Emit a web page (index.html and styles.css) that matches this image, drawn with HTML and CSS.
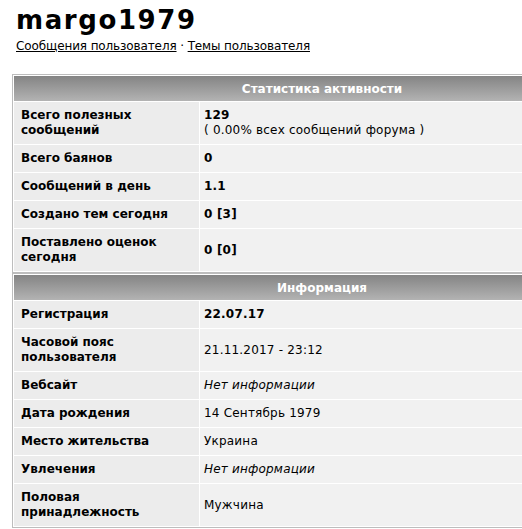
FILE: index.html
```html
<!DOCTYPE html>
<html lang="ru">
<head>
    <meta charset="UTF-8">
    <title>margo1979</title>
    <link rel="stylesheet" href="styles.css">
</head>
<body>

    <div class="page">
        <div class="profile-head">
            <h1>margo1979</h1>
            <div class="profile-links">
                <a href="#">Сообщения пользователя</a> &middot; <a href="#">Темы пользователя</a>
            </div>
        </div>

        <table class="profile-table">
            <tr><th colspan="2">Статистика активности</th></tr>
            <tr>
                <td class="label">Всего полезных сообщений</td>
                <td class="value"><b>129</b><br>( 0.00% всех сообщений форума )</td>
            </tr>
            <tr><td class="label">Всего баянов</td><td class="value"><b>0</b></td></tr>
            <tr><td class="label">Сообщений в день</td><td class="value"><b>1.1</b></td></tr>
            <tr><td class="label">Создано тем сегодня</td><td class="value"><b>0 [3]</b></td></tr>
            <tr><td class="label">Поставлено оценок сегодня</td><td class="value"><b>0 [0]</b></td></tr>
        </table>

        <table class="profile-table">
            <tr><th colspan="2">Информация</th></tr>
            <tr><td class="label">Регистрация</td><td class="value"><b>22.07.17</b></td></tr>
            <tr><td class="label">Часовой пояс пользователя</td><td class="value">21.11.2017 - 23:12</td></tr>
            <tr><td class="label">Вебсайт</td><td class="value"><i>Нет информации</i></td></tr>
            <tr><td class="label">Дата рождения</td><td class="value">14 Сентябрь 1979</td></tr>
            <tr><td class="label">Место жительства</td><td class="value">Украина</td></tr>
            <tr><td class="label">Увлечения</td><td class="value"><i>Нет информации</i></td></tr>
            <tr><td class="label">Половая принадлежность</td><td class="value">Мужчина</td></tr>
        </table>
    </div>

</body>
</html>
```

FILE: styles.css
```css
html, body {
    overflow: hidden;
}

body {
    font-family: "DejaVu Sans", Verdana, sans-serif;
    font-size: 12px;
    color: #000;
    background: #fff;
    margin: 0;
    padding: 0;
}

.page {
    width: 640px;
    padding-left: 12px;
}

.profile-head {
    padding-left: 4px;
    margin-bottom: 20px;
}

h1 {
    font-size: 26px;
    letter-spacing: 1.6px;
    line-height: 30px;
    margin: 5px 0 0;
}

.profile-links {
    line-height: 16px;
    margin-top: 3px;
    letter-spacing: -0.12px;
}

.profile-links a {
    color: #000;
    text-decoration: underline;
}

.profile-table {
    width: 620px;
    border: 1px solid #bdbdbd;
    border-spacing: 1px;
    background: #fff;
    margin: 0;
}

.profile-table th {
    height: 25px;
    padding: 0;
    color: #fff;
    font-weight: bold;
    text-align: center;
    background: linear-gradient(#848484, #b3b3b3);
}

.profile-table td {
    line-height: 15px;
    padding: 6px 4px;
    vertical-align: middle;
    text-align: left;
}

.label {
    width: 185px;
    box-sizing: border-box;
    padding-left: 7px !important;
    font-weight: bold;
    background: #ececec;
}

.value {
    letter-spacing: 0.2px;
    background: #f1f1f1;
}
```
